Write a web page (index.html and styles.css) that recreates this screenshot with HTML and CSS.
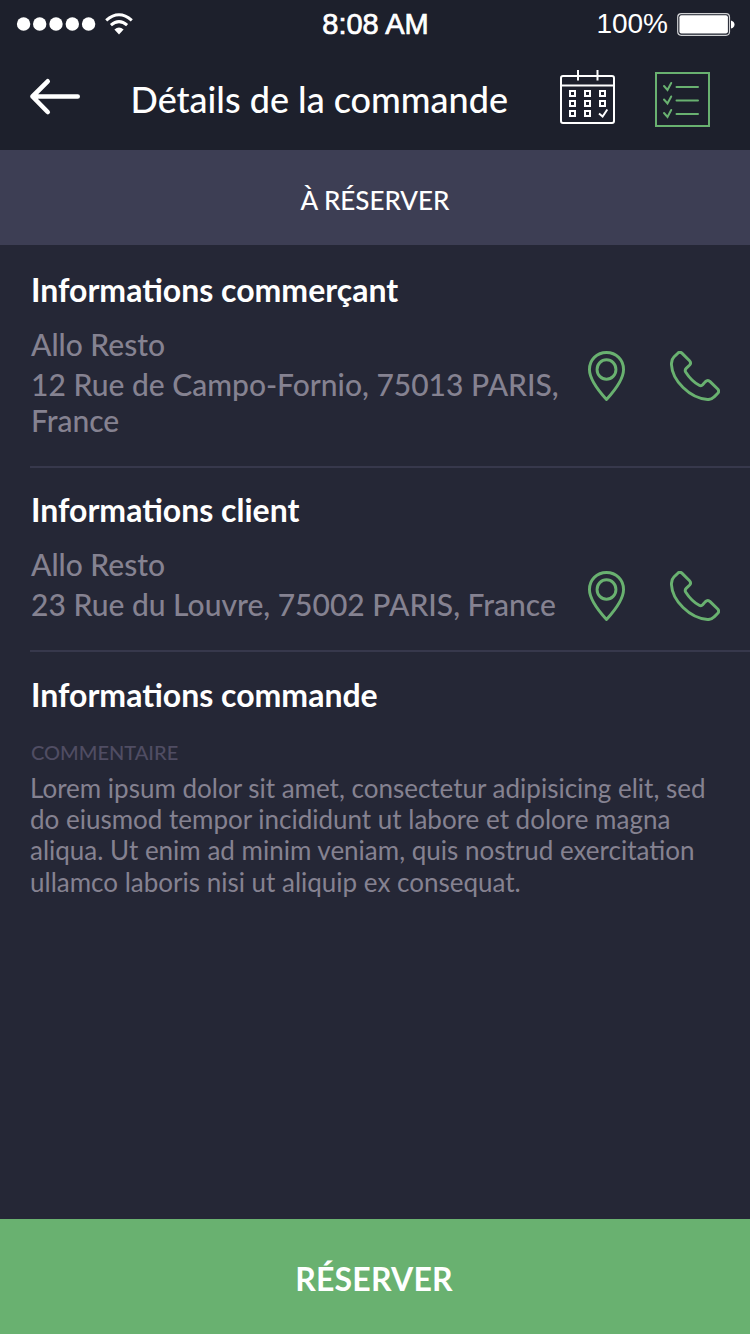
FILE: index.html
```html
<!DOCTYPE html>
<html lang="fr">
<head>
<meta charset="utf-8">
<title>Détails de la commande</title>
<link rel="stylesheet" href="styles.css">
</head>
<body>
<svg class="symbols" aria-hidden="true">
  <symbol id="pin" viewBox="0 0 38 50" preserveAspectRatio="none">
    <path d="M19 1.5C9 1.5 1.5 9 1.5 18.5C1.5 29 11 40 19 48.5C27 40 36.500 29 36.500 18.500C36.500 9 29 1.500 19 1.500Z"/>
    <circle cx="19" cy="18.500" r="9.700"/>
  </symbol>
  <symbol id="phone" viewBox="0.5 0.5 51 51">
    <path d="M8.200 3C9.800 1.300 11.300 1.300 12.900 2.900L20.200 10.200C22 12 22 13.200 20.600 14.800L17 18.200C15.700 19.500 15.600 20.500 16.600 22.200C20.200 27.800 24.900 32.600 30.300 35.500C31.700 36.300 32.700 36.200 33.800 35L36.400 32C38.200 30.200 39.700 30 41.400 31.700L48.900 39C50.700 40.800 50.600 42.300 49 43.900L45.300 47.500C43.500 49.400 41.500 50.200 38.800 50C20.500 48.800 2.800 30.500 2 14.500C1.800 11 2.300 8.900 4.500 6.700Z"/>
  </symbol>
</svg>
<main class="screen">
  <header class="header">
    <div class="status">
      <div class="signal">
        <svg width="80" height="16" viewBox="0 0 80 16" fill="#fff"><circle cx="7.600" cy="8" r="6.700"/><circle cx="23.700" cy="8" r="6.700"/><circle cx="40" cy="8" r="6.700"/><circle cx="56.300" cy="8" r="6.700"/><circle cx="72.600" cy="8" r="6.700"/></svg>
        <svg class="wifi" width="30" height="24" viewBox="0 0 30 24" fill="none" stroke="#fff" stroke-width="3"><path d="M2.200 8.300Q15 -2.800 27.800 8.300M6.900 13.100Q15 6.200 23.100 13.100"/><path d="M10.400 17.500Q15 13.500 19.600 17.500L15 22.400Z" fill="#fff" stroke="none"/></svg>
      </div>
      <div class="time">8:08 AM</div>
      <div class="power">
        <span>100%</span>
        <svg width="58" height="23" viewBox="0 0 58 23"><rect x=".7" y=".7" width="51.800" height="21.600" rx="3.500" fill="none" stroke="#d0d1d4" stroke-width="1.200"/><rect x="2.400" y="2.300" width="48.500" height="18.300" rx="2" fill="#fff"/><path d="M54 7.500Q57.500 8.500 57.500 11.500T54 15.500Z" fill="#fff"/></svg>
      </div>
    </div>
    <nav class="nav">
      <svg class="back" width="52" height="38" viewBox="0 0 52 38" fill="none" stroke="#fff" stroke-width="4.600" stroke-linecap="round" stroke-linejoin="round"><path d="M48.700 18.500H3.500L18.700 3.300M3.500 18.500L18.700 34"/></svg>
      <h1 class="title">Détails de la commande</h1>
      <svg class="calendar" width="55" height="55" viewBox="0 0 55 55" fill="none" stroke="#fff" stroke-width="2">
        <rect x="1" y="6" width="53" height="47" rx="2"/>
        <path d="M1 15.500H54M18 0V10.500M37.500 0V10.500"/>
        <path d="M10 21h5v5h-5zM25 21h5v5h-5zM40 21h5v5h-5zM10 31h5v5h-5zM25 31h5v5h-5zM40 31h5v5h-5zM10 41h5v5h-5zM25 41h5v5h-5zM39 43.500L42.600 46.500L47.300 39.500"/>
      </svg>
      <svg class="checklist" width="55" height="55" viewBox="0 0 55 55" fill="none" stroke="#69b170" stroke-width="2">
        <rect x="1" y="1" width="53" height="53"/>
        <path d="M21.500 15H43M21.500 28.500H43M21.500 42H43M9 14L12.500 18L16.200 11M9 27.500L12.500 31.500L16.200 24.500M9 41L12.500 45L16.200 38" stroke-linecap="round"/>
      </svg>
    </nav>
  </header>
  <div class="state">À RÉSERVER</div>
  <div class="content">
    <section class="info merchant">
      <h2 class="heading">Informations commerçant</h2>
      <div class="contact">
        <div class="address"><p class="name">Allo Resto</p><p>12 Rue de Campo-Fornio, 75013 PARIS,<br>France</p></div>
        <div class="actions"><svg class="pin"><use href="#pin"/></svg><svg class="phone"><use href="#phone"/></svg></div>
      </div>
    </section>
    <section class="info client">
      <h2 class="heading">Informations client</h2>
      <div class="contact">
        <div class="address"><p class="name">Allo Resto</p><p>23 Rue du Louvre, 75002 PARIS, France</p></div>
        <div class="actions"><svg class="pin"><use href="#pin"/></svg><svg class="phone"><use href="#phone"/></svg></div>
      </div>
    </section>
    <section class="order">
      <h2 class="heading">Informations commande</h2>
      <h3 class="label">COMMENTAIRE</h3>
      <p class="comment">Lorem ipsum dolor sit amet, consectetur adipisicing elit, sed<br>do eiusmod tempor incididunt ut labore et dolore magna<br>aliqua. Ut enim ad minim veniam, quis nostrud exercitation<br>ullamco laboris nisi ut aliquip ex consequat.</p>
    </section>
  </div>
  <button class="reserve">RÉSERVER</button>
</main>
</body>
</html>
```
FILE: styles.css
```css
* { box-sizing: border-box; margin: 0; padding: 0; }
body { background: #252736; font-family: Lato, sans-serif; color: #fff; }
svg { display: block; flex: none; }
.symbols { display: none; }
.screen { width: 750px; height: 1334px; display: flex; flex-direction: column; overflow: hidden; }
.header { height: 150px; flex: none; background: #1d202c; }
.status { height: 48px; display: grid; grid-template-columns: 1fr auto 1fr; align-items: center; padding: 0 15px 0 16px; font: 28px/32px "Liberation Sans", sans-serif; }
.signal { display: flex; align-items: center; gap: 8px; }
.time { font-size: 29px; -webkit-text-stroke: .7px #fff; }
.power { display: flex; align-items: center; justify-content: flex-end; gap: 9px; }
.nav { height: 102px; display: flex; align-items: flex-start; padding-left: 29px; }
.back { margin-top: 30px; }
.title { width: 429px; margin-top: 30px; padding-left: 49.5px; font-size: 36px; line-height: 43px; font-weight: 500; white-space: nowrap; }
.calendar { margin: 22px 0 0 50px; }
.checklist { margin: 24px 0 0 40px; }
.state { height: 95px; flex: none; background: #3d3e54; text-align: center; font-size: 26px; line-height: 100px; font-weight: 500; }
.content { flex: 1; padding-left: 30px; }
.info { border-bottom: 2px solid #37384c; }
.merchant { height: 223px; padding-top: 26px; }
.client { height: 184px; padding-top: 23px; }
.heading { padding-left: 1px; font-size: 32px; line-height: 38px; font-weight: 700; }
.contact { display: flex; justify-content: space-between; padding: 17px 30px 0 1px; }
.address { color: #858291; font-size: 30px; line-height: 36px; font-weight: 500; white-space: nowrap; }
.name { margin-bottom: 4px; }
.actions { display: flex; gap: 45px; margin-top: 25px; fill: none; stroke: #69b170; stroke-width: 3; stroke-linejoin: round; }
.pin { width: 37px; height: 50px; }
.phone { width: 50px; height: 50px; }
.order { padding-top: 24px; }
.label { margin-top: 26px; padding-left: 1px; color: #504d63; font-size: 20px; line-height: 24px; font-weight: 500; }
.comment { margin-top: 9px; color: #858291; font-size: 26px; line-height: 31.2px; white-space: nowrap; }
.reserve { height: 115px; flex: none; border: 0; background: #69b170; color: #fff; font: 700 32px/38px Lato, sans-serif; letter-spacing: .2px; padding: 5px 2px 0 0; }
```
